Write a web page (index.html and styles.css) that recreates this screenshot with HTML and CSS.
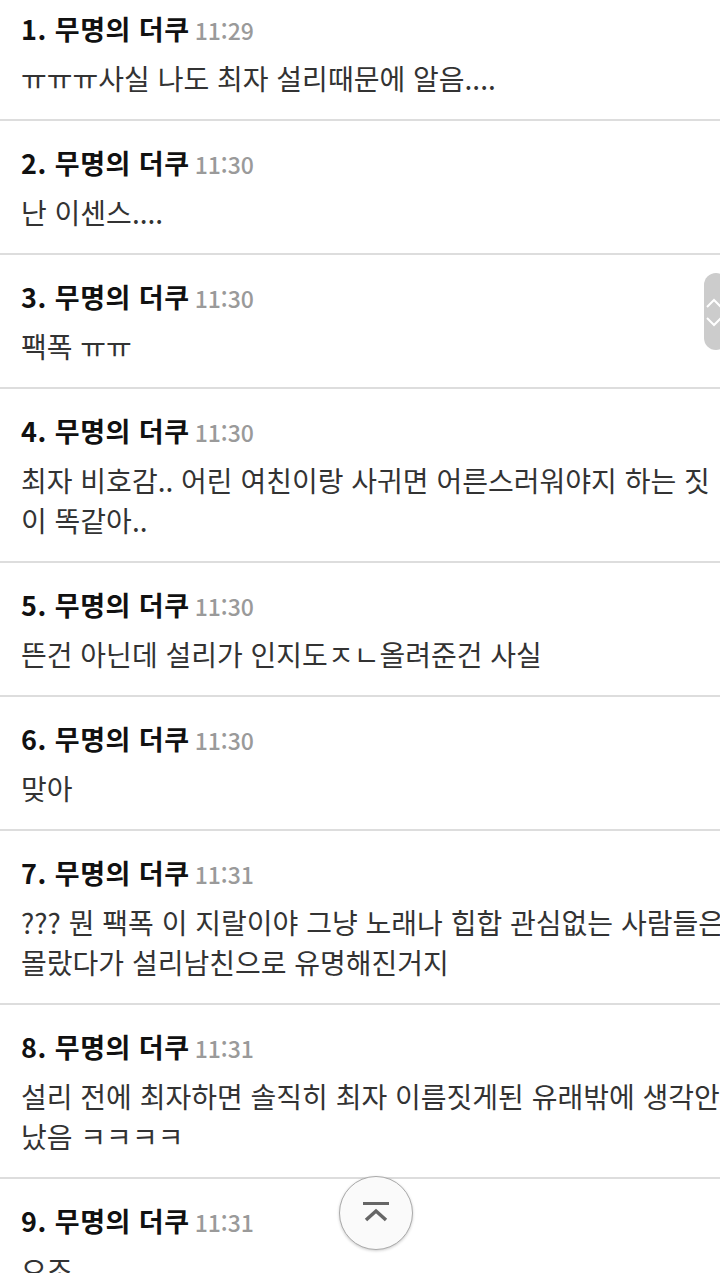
FILE: index.html
```html
<!DOCTYPE html>
<html lang="ko">
<head>
  <meta charset="UTF-8">
  <title>댓글</title>
  <link rel="stylesheet" href="styles.css">
</head>
<body>
  <ul class="comments">
    <li class="comment">
      <div class="meta"><span class="num">1.</span> 무명의 더쿠 <span class="time">11:29</span></div>
      <p class="text">ㅠㅠㅠ사실 나도 최자 설리때문에 알음....</p>
    </li>
    <li class="comment">
      <div class="meta"><span class="num">2.</span> 무명의 더쿠 <span class="time">11:30</span></div>
      <p class="text">난 이센스....</p>
    </li>
    <li class="comment">
      <div class="meta"><span class="num">3.</span> 무명의 더쿠 <span class="time">11:30</span></div>
      <p class="text">팩폭 ㅠㅠ</p>
    </li>
    <li class="comment">
      <div class="meta"><span class="num">4.</span> 무명의 더쿠 <span class="time">11:30</span></div>
      <p class="text">최자 비호감.. 어린 여친이랑 사귀면 어른스러워야지 하는 짓이 똑같아..</p>
    </li>
    <li class="comment">
      <div class="meta"><span class="num">5.</span> 무명의 더쿠 <span class="time">11:30</span></div>
      <p class="text">뜬건 아닌데 설리가 인지도ㅈㄴ올려준건 사실</p>
    </li>
    <li class="comment">
      <div class="meta"><span class="num">6.</span> 무명의 더쿠 <span class="time">11:30</span></div>
      <p class="text">맞아</p>
    </li>
    <li class="comment">
      <div class="meta"><span class="num">7.</span> 무명의 더쿠 <span class="time">11:31</span></div>
      <p class="text">??? 뭔 팩폭 이 지랄이야 그냥 노래나 힙합 관심없는 사람들은 몰랐다가 설리남친으로 유명해진거지</p>
    </li>
    <li class="comment">
      <div class="meta"><span class="num">8.</span> 무명의 더쿠 <span class="time">11:31</span></div>
      <p class="text">설리 전에 최자하면 솔직히 최자 이름짓게된 유래밖에 생각안났음 ㅋㅋㅋㅋ</p>
    </li>
    <li class="comment">
      <div class="meta"><span class="num">9.</span> 무명의 더쿠 <span class="time">11:31</span></div>
      <p class="text">오조</p>
    </li>
  </ul>

  <div class="scroller">
    <svg width="16" height="50" viewBox="0 0 16 50">
      <path d="M3 20 L10 13 L17 20" fill="none" stroke="#fff" stroke-width="2"/>
      <path d="M3 31 L10 38 L17 31" fill="none" stroke="#fff" stroke-width="2"/>
    </svg>
  </div>

  <button class="top-btn">
    <svg width="28" height="24" viewBox="0 0 28 24">
      <rect x="1" y="1" width="26" height="3" fill="#666"/>
      <path d="M4 19 L14 10 L24 19" fill="none" stroke="#666" stroke-width="3.5"/>
    </svg>
  </button>
</body>
</html>
```

FILE: styles.css
```css
html {
  overflow: hidden;
}

body {
  margin: 0;
  width: 720px;
  height: 1273px;
  overflow: hidden;
  background: #fff;
  font-family: "Noto Sans CJK KR", "Noto Sans", sans-serif;
  color: #333;
  position: relative;
}

.comments {
  list-style: none;
  margin: -13px 0 0;
  padding: 0;
  width: 724px;
}

.comment {
  padding: 24px 0 21px 21px;
  border-bottom: 2px solid #ddd;
}

.meta {
  font-size: 27px;
  line-height: 36px;
  font-weight: bold;
  color: #111;
  white-space: nowrap;
  letter-spacing: 0.5px;
}

.time {
  font-size: 23px;
  font-weight: 500;
  color: #9a9a9a;
  margin-left: -3px;
  letter-spacing: 0;
}

.text {
  margin: 10px 0 0;
  font-size: 28px;
  line-height: 40px;
}

.scroller {
  position: absolute;
  top: 273px;
  right: -8px;
  width: 24px;
  height: 77px;
  background: #ccc;
  border-radius: 12px;
  display: flex;
  align-items: center;
}

.top-btn {
  position: absolute;
  left: 339px;
  top: 1176px;
  width: 74px;
  height: 74px;
  border-radius: 50%;
  border: 1px solid #aaa;
  background: #fafafa;
  box-shadow: 0 1px 3px rgba(0, 0, 0, 0.2);
  display: flex;
  align-items: center;
  justify-content: center;
  padding: 0;
}
```
